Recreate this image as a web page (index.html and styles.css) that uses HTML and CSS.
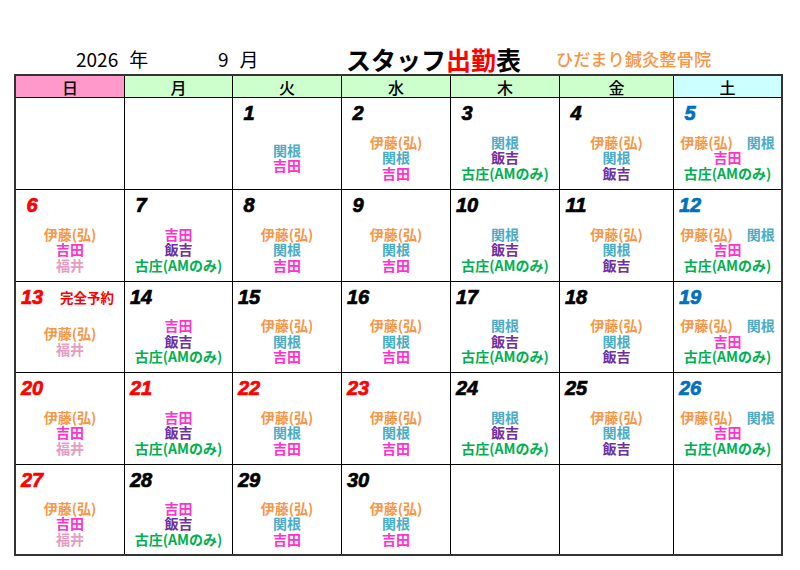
FILE: index.html
```html
<!DOCTYPE html>
<html lang="ja">
<head>
<meta charset="utf-8">
<title>スタッフ出勤表</title>
<link rel="stylesheet" href="styles.css">
</head>
<body>
<div class="page">
  <header class="top">
    <div class="year">2026<span class="unit">年</span></div>
    <div class="month">9<span class="unit">月</span></div>
    <div class="title">スタッフ<span class="red">出勤</span>表</div>
    <div class="clinic">ひだまり鍼灸整骨院</div>
  </header>
  <div class="cal">
    <div class="hd sun">日</div>
    <div class="hd wk">月</div>
    <div class="hd wk">火</div>
    <div class="hd wk">水</div>
    <div class="hd wk">木</div>
    <div class="hd wk">金</div>
    <div class="hd sat">土</div>

    <div class="cell"></div>
    <div class="cell"></div>
    <div class="cell"><div class="num-row"><span class="num">1</span></div><div class="names"><span class="n-seki">関根</span><span class="n-yos">吉田</span></div></div>
    <div class="cell"><div class="num-row"><span class="num">2</span></div><div class="names"><span class="n-ito">伊藤(弘)</span><span class="n-seki">関根</span><span class="n-yos">吉田</span></div></div>
    <div class="cell"><div class="num-row"><span class="num">3</span></div><div class="names"><span class="n-seki">関根</span><span class="n-iiy">飯吉</span><span class="n-fur">古庄(AMのみ)</span></div></div>
    <div class="cell"><div class="num-row"><span class="num">4</span></div><div class="names"><span class="n-ito">伊藤(弘)</span><span class="n-seki">関根</span><span class="n-iiy">飯吉</span></div></div>
    <div class="cell"><div class="num-row"><span class="num blue">5</span></div><div class="names"><span class="pair"><span class="n-ito">伊藤(弘)</span><span class="n-seki">関根</span></span><span class="n-yos">吉田</span><span class="n-fur">古庄(AMのみ)</span></div></div>

    <div class="cell"><div class="num-row"><span class="num red">6</span></div><div class="names"><span class="n-ito">伊藤(弘)</span><span class="n-yos">吉田</span><span class="n-fuk">福井</span></div></div>
    <div class="cell"><div class="num-row"><span class="num">7</span></div><div class="names"><span class="n-yos">吉田</span><span class="n-iiy">飯吉</span><span class="n-fur">古庄(AMのみ)</span></div></div>
    <div class="cell"><div class="num-row"><span class="num">8</span></div><div class="names"><span class="n-ito">伊藤(弘)</span><span class="n-seki">関根</span><span class="n-yos">吉田</span></div></div>
    <div class="cell"><div class="num-row"><span class="num">9</span></div><div class="names"><span class="n-ito">伊藤(弘)</span><span class="n-seki">関根</span><span class="n-yos">吉田</span></div></div>
    <div class="cell"><div class="num-row"><span class="num">10</span></div><div class="names"><span class="n-seki">関根</span><span class="n-iiy">飯吉</span><span class="n-fur">古庄(AMのみ)</span></div></div>
    <div class="cell"><div class="num-row"><span class="num">11</span></div><div class="names"><span class="n-ito">伊藤(弘)</span><span class="n-seki">関根</span><span class="n-iiy">飯吉</span></div></div>
    <div class="cell"><div class="num-row"><span class="num blue">12</span></div><div class="names"><span class="pair"><span class="n-ito">伊藤(弘)</span><span class="n-seki">関根</span></span><span class="n-yos">吉田</span><span class="n-fur">古庄(AMのみ)</span></div></div>

    <div class="cell"><div class="num-row"><span class="num red">13</span><span class="note">完全予約</span></div><div class="names"><span class="n-ito">伊藤(弘)</span><span class="n-fuk">福井</span></div></div>
    <div class="cell"><div class="num-row"><span class="num">14</span></div><div class="names"><span class="n-yos">吉田</span><span class="n-iiy">飯吉</span><span class="n-fur">古庄(AMのみ)</span></div></div>
    <div class="cell"><div class="num-row"><span class="num">15</span></div><div class="names"><span class="n-ito">伊藤(弘)</span><span class="n-seki">関根</span><span class="n-yos">吉田</span></div></div>
    <div class="cell"><div class="num-row"><span class="num">16</span></div><div class="names"><span class="n-ito">伊藤(弘)</span><span class="n-seki">関根</span><span class="n-yos">吉田</span></div></div>
    <div class="cell"><div class="num-row"><span class="num">17</span></div><div class="names"><span class="n-seki">関根</span><span class="n-iiy">飯吉</span><span class="n-fur">古庄(AMのみ)</span></div></div>
    <div class="cell"><div class="num-row"><span class="num">18</span></div><div class="names"><span class="n-ito">伊藤(弘)</span><span class="n-seki">関根</span><span class="n-iiy">飯吉</span></div></div>
    <div class="cell"><div class="num-row"><span class="num blue">19</span></div><div class="names"><span class="pair"><span class="n-ito">伊藤(弘)</span><span class="n-seki">関根</span></span><span class="n-yos">吉田</span><span class="n-fur">古庄(AMのみ)</span></div></div>

    <div class="cell"><div class="num-row"><span class="num red">20</span></div><div class="names"><span class="n-ito">伊藤(弘)</span><span class="n-yos">吉田</span><span class="n-fuk">福井</span></div></div>
    <div class="cell"><div class="num-row"><span class="num red">21</span></div><div class="names"><span class="n-yos">吉田</span><span class="n-iiy">飯吉</span><span class="n-fur">古庄(AMのみ)</span></div></div>
    <div class="cell"><div class="num-row"><span class="num red">22</span></div><div class="names"><span class="n-ito">伊藤(弘)</span><span class="n-seki">関根</span><span class="n-yos">吉田</span></div></div>
    <div class="cell"><div class="num-row"><span class="num red">23</span></div><div class="names"><span class="n-ito">伊藤(弘)</span><span class="n-seki">関根</span><span class="n-yos">吉田</span></div></div>
    <div class="cell"><div class="num-row"><span class="num">24</span></div><div class="names"><span class="n-seki">関根</span><span class="n-iiy">飯吉</span><span class="n-fur">古庄(AMのみ)</span></div></div>
    <div class="cell"><div class="num-row"><span class="num">25</span></div><div class="names"><span class="n-ito">伊藤(弘)</span><span class="n-seki">関根</span><span class="n-iiy">飯吉</span></div></div>
    <div class="cell"><div class="num-row"><span class="num blue">26</span></div><div class="names"><span class="pair"><span class="n-ito">伊藤(弘)</span><span class="n-seki">関根</span></span><span class="n-yos">吉田</span><span class="n-fur">古庄(AMのみ)</span></div></div>

    <div class="cell"><div class="num-row"><span class="num red">27</span></div><div class="names"><span class="n-ito">伊藤(弘)</span><span class="n-yos">吉田</span><span class="n-fuk">福井</span></div></div>
    <div class="cell"><div class="num-row"><span class="num">28</span></div><div class="names"><span class="n-yos">吉田</span><span class="n-iiy">飯吉</span><span class="n-fur">古庄(AMのみ)</span></div></div>
    <div class="cell"><div class="num-row"><span class="num">29</span></div><div class="names"><span class="n-ito">伊藤(弘)</span><span class="n-seki">関根</span><span class="n-yos">吉田</span></div></div>
    <div class="cell"><div class="num-row"><span class="num">30</span></div><div class="names"><span class="n-ito">伊藤(弘)</span><span class="n-seki">関根</span><span class="n-yos">吉田</span></div></div>
    <div class="cell"></div>
    <div class="cell"></div>
    <div class="cell"></div>
  </div>
</div>
</body>
</html>
```
FILE: styles.css
```css
* { box-sizing: border-box; }
html, body { margin: 0; padding: 0; background: #fff; }
body {
  width: 800px;
  height: 570px;
  overflow: hidden;
  font-family: "Noto Sans CJK JP", "Noto Sans", sans-serif;
  color: #000;
}
.page { padding-left: 14px; }

.top {
  height: 74px;
  display: flex;
  align-items: center;
  padding-top: 44px;
  padding-left: 62px;
}
.year, .month {
  font-size: 19px;
  font-weight: 400;
  line-height: 30px;
}
.year { width: 142px; }
.month { width: 128px; }
.unit { margin-left: 11px; }
.title {
  width: 210px;
  font-size: 25px;
  font-weight: 700;
  line-height: 30px;
  letter-spacing: 0;
}
.title .red { color: #ff0000; }
.clinic {
  font-size: 17.3px;
  font-weight: 500;
  color: #f79646;
  line-height: 30px;
}

.cal {
  display: grid;
  grid-template-columns: 108px 107px 108px 108px 108px 113px 107px;
  grid-template-rows: 21px 91px 91px 90px 91px 89px;
  gap: 1px;
  background: #000;
  border: 2px solid #333;
  width: 769px;
}
.hd {
  display: flex;
  align-items: center;
  justify-content: center;
  font-size: 16px;
  font-weight: 500;
  line-height: 1;
}
.hd.sun { background: #ff99cc; }
.hd.wk { background: #ccffcc; }
.hd.sat { background: #ccffff; }
.cal > .hd:nth-child(-n+7) { border-bottom: 1px solid #000; margin-bottom: -1px; }

.cell {
  background: #fff;
  display: flex;
  flex-direction: column;
}
.num-row {
  height: 30px;
  display: flex;
  align-items: center;
}
.num {
  width: 32px;
  text-align: center;
  font-family: "Liberation Sans", Arial, sans-serif;
  font-weight: 700;
  font-style: italic;
  font-size: 20px;
  line-height: 30px;
  -webkit-text-stroke: 0.7px currentColor;
  color: #000;
}
.num.red { color: #ff0000; }
.num.blue { color: #0070c0; }
.note {
  margin-left: 12px;
  font-size: 13.5px;
  font-weight: 700;
  color: #ff0000;
}

.names {
  flex: 1;
  display: flex;
  flex-direction: column;
  align-items: center;
  justify-content: center;
  font-size: 14px;
  font-weight: 700;
  line-height: 15.5px;
  padding-bottom: 1px;
}
.pair { display: flex; gap: 14px; }
.n-ito { color: #f79646; }
.n-seki { color: #4bacc6; }
.n-yos { color: #ff33cc; }
.n-iiy { color: #7030a0; }
.n-fur { color: #00b050; }
.n-fuk { color: #e79cbf; }
```
